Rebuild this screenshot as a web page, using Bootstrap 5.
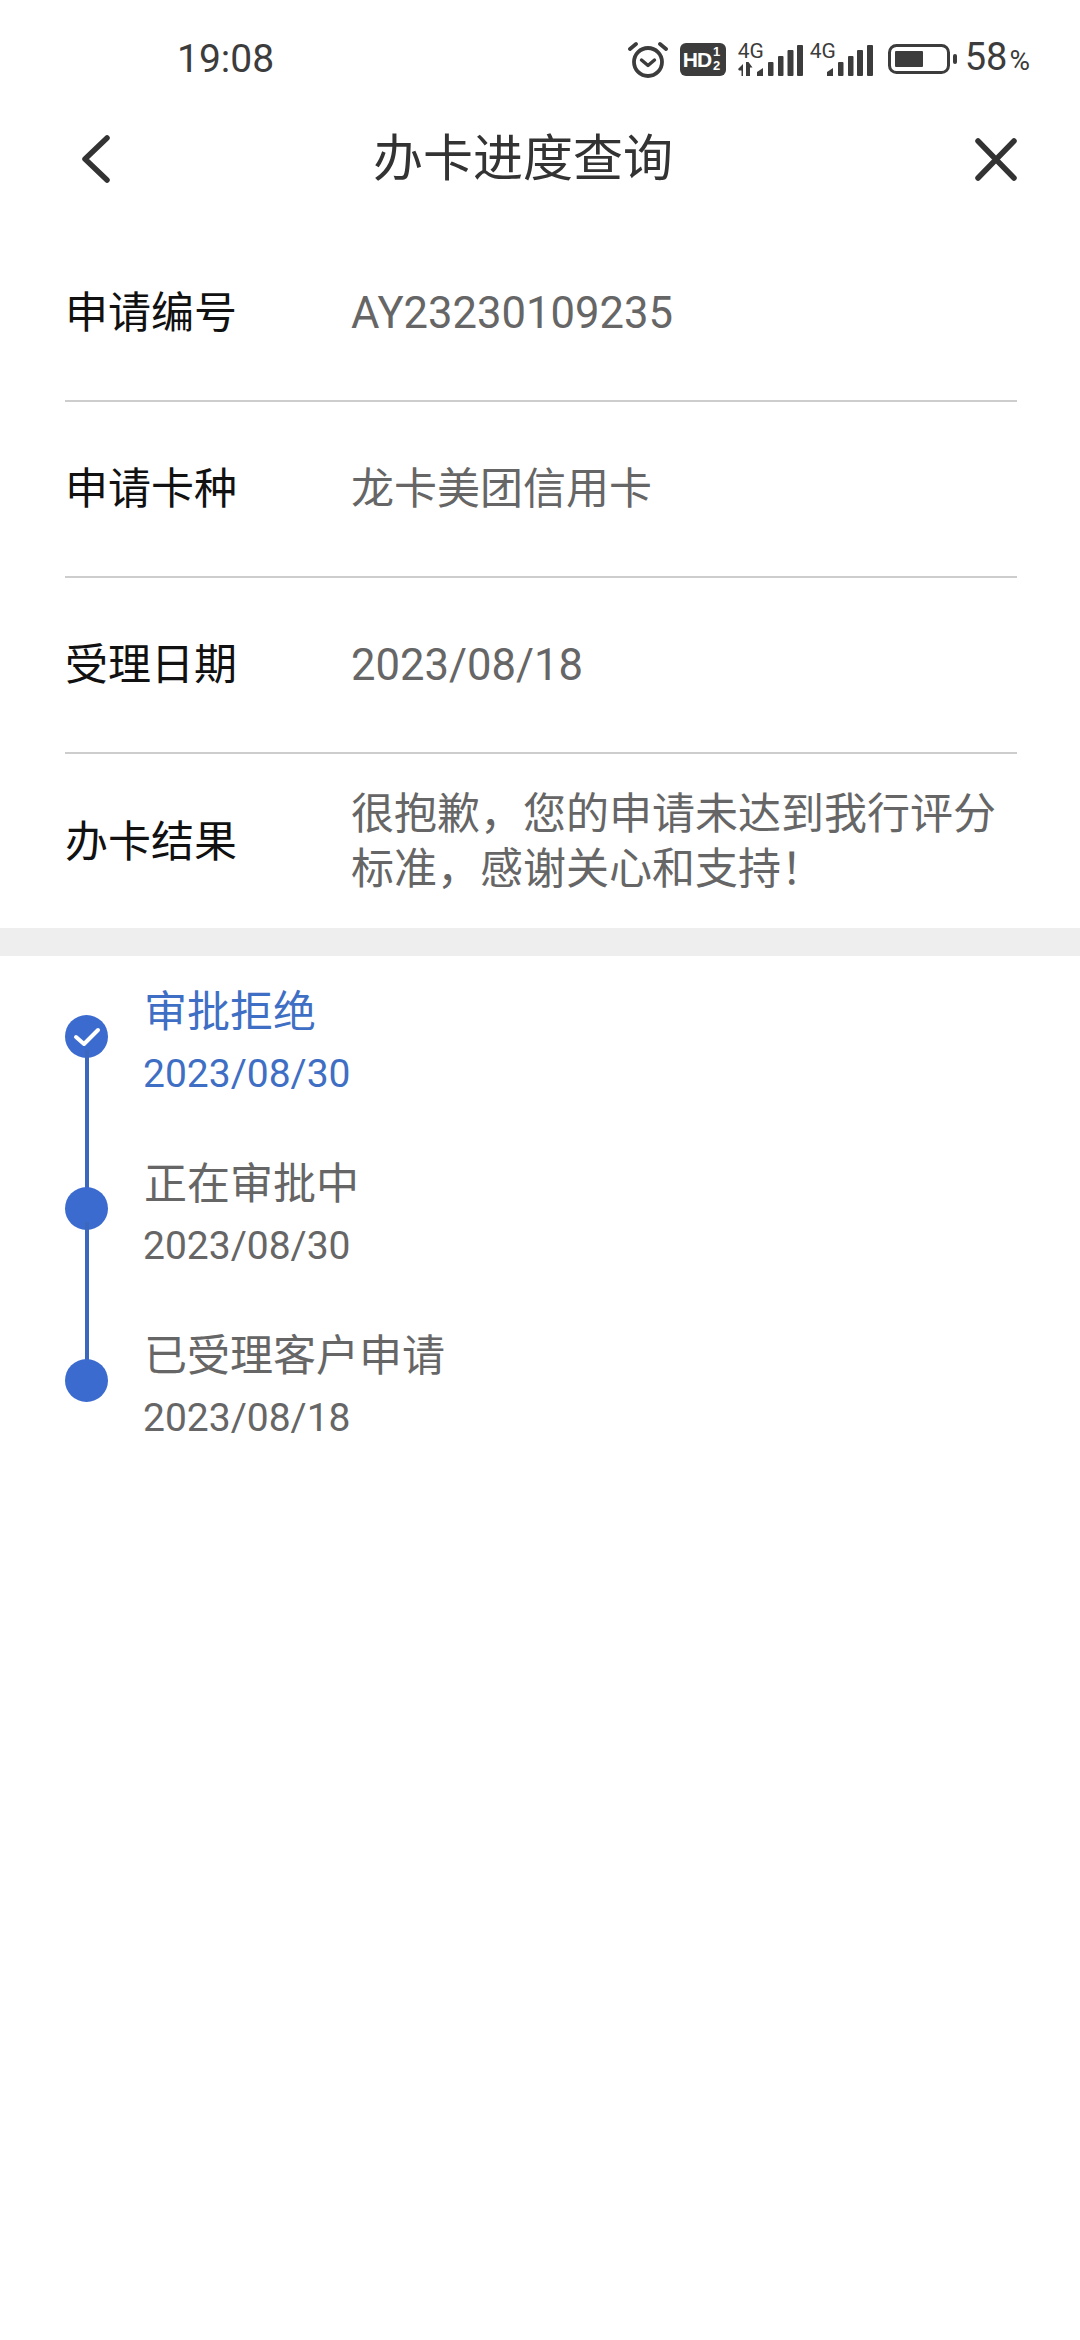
<!DOCTYPE html>
<html lang="zh-CN">
    <head>
        <meta charset="UTF-8">
        <meta name="viewport" content="width=device-width, initial-scale=1.0">
        <link href="https://cdn.jsdelivr.net/npm/bootstrap@5.3.3/dist/css/bootstrap.min.css" rel="stylesheet">
        <title>办卡进度查询</title>
        <style>
            body { font-family: Roboto, "Noto Sans CJK SC", sans-serif; background: #fff; color: #333; width: 1080px; }
            .status-row { height: 85px; padding: 37px 50px 0 177px; color: #3c3c3c; }
            .status-time { font-size: 39px; line-height: 44px; }
            .status-icons { height: 44px; }
            .status-pct { font-size: 38px; line-height: 44px; margin-left: 8px; }
            .status-pct small { font-size: 28px; margin-left: 2px; }
            .alarm-icon { margin-right: 12px; }
            .hd-tag { background: #3c3c3c; color: #fff; border-radius: 6px; width: 46px; height: 33px; font: 700 21px/33px "Liberation Sans", sans-serif; padding-left: 3px; letter-spacing: -1px; }
            .hd-frac { font-size: 13px; line-height: 14px; letter-spacing: 0; margin-left: 2px; }
            .net-tag { font-size: 21px; line-height: 19px; position: absolute; top: -1px; }
            .net-one { width: 65px; height: 33px; margin-left: 12px; }
            .net-two { width: 63px; height: 33px; margin-left: 7px; margin-right: 15px; }
            .title-bar { height: 141px; padding: 7px 63px 0 82px; }
            .title-text { font-size: 50px; color: #333; margin-left: 263px; }
            .info-row { height: 176px; margin: 0 63px 0 65px; border-bottom: 2px solid #cdcdcd; }
            .info-row:last-child { border-bottom: 0; }
            .info-name { width: 286px; font-size: 43px; color: #111; flex-shrink: 0; }
            .info-value { font-size: 43px; color: #666; line-height: 55px; }
            .info-latin { font-size: 43.6px; }
            .gap-band { height: 28px; margin-top: -2px; background: #eee; }
            .step-list { padding: 34px 0 0 65px; }
            .step-item { height: 172px; }
            .step-rail { width: 43px; margin-right: 36px; padding-top: 25px; position: relative; flex-shrink: 0; }
            .step-dot { width: 43px; height: 43px; border-radius: 50%; background: #3b6bcf; }
            .step-line { position: absolute; left: 20px; top: 60px; width: 4px; height: 172px; background: #3b68bd; }
            .step-text { margin-top: -1px; }
            .step-title { font-size: 43px; line-height: 46px; color: #666; }
            .step-date { font-size: 39px; line-height: 46px; margin-top: 16px; color: #666; margin-left: -1px; }
            .step-on .step-title, .step-on .step-date { color: #3f6fc4; }
        </style>
    </head>
    <body>
        <div class="status-row d-flex justify-content-between align-items-start">
            <div class="status-time">19:08</div>
            <div class="status-icons d-flex align-items-center">
                <svg class="alarm-icon" width="40" height="37" viewBox="0 0 40 37" fill="none" stroke="#3c3c3c" stroke-width="3.8" stroke-linecap="round" stroke-linejoin="round">
                    <circle cx="20" cy="21" r="14"/>
                    <path d="M13.500 19l6.500 5.500 6.500-5.500" stroke-width="3.4"/>
                    <path d="M2 8l6-5M38 8l-6-5"/>
                </svg>
                <div class="hd-tag d-flex align-items-center">HD<span class="hd-frac text-center">1<br>2</span></div>
                <div class="net-one position-relative">
                    <span class="net-tag start-0">4G</span>
                    <svg class="position-absolute bottom-0 start-0" width="65" height="33" viewBox="0 0 65 33" fill="#3c3c3c">
                        <path d="M0 26l5-5v12h-1.500v-5.500H1zM8 19h2.500l4 5.500h-2.500V33H8z"/>
                        <path d="M19 29l6-4v8h-6z"/>
                        <rect x="30" y="19" width="5.500" height="14" rx="1"/><rect x="40" y="13" width="5.500" height="20" rx="1"/><rect x="49.500" y="7" width="6" height="26" rx="1"/><rect x="59" y="2" width="6" height="31" rx="1"/>
                    </svg>
                </div>
                <div class="net-two position-relative">
                    <span class="net-tag start-0">4G</span>
                    <svg class="position-absolute bottom-0 start-0" width="63" height="33" viewBox="0 0 63 33" fill="#3c3c3c">
                        <path d="M17 29l6-4v8h-6z"/>
                        <rect x="28" y="19" width="5.500" height="14" rx="1"/><rect x="38" y="13" width="5.500" height="20" rx="1"/><rect x="47" y="7" width="6" height="26" rx="1"/><rect x="57" y="2" width="6" height="31" rx="1"/>
                    </svg>
                </div>
                <svg width="69" height="30" viewBox="0 0 69 30">
                    <rect x="1.500" y="1.500" width="59" height="27" rx="7" fill="none" stroke="#3c3c3c" stroke-width="3"/>
                    <rect x="7" y="7" width="28" height="16" rx="1" fill="#3c3c3c"/>
                    <rect x="65" y="10" width="4" height="10" rx="2" fill="#3c3c3c"/>
                </svg>
                <div class="status-pct">58<small>%</small></div>
            </div>
        </div>

        <div class="title-bar d-flex align-items-center">
            <svg width="28" height="48" viewBox="0 0 28 48" fill="none" stroke="#333" stroke-width="5.500" stroke-linecap="round" stroke-linejoin="round">
                <path d="M25 3L3 24l22 21"/>
            </svg>
            <div class="title-text">办卡进度查询</div>
            <svg class="ms-auto" width="42" height="43" viewBox="0 0 42 43" fill="none" stroke="#333" stroke-width="5.500" stroke-linecap="round">
                <path d="M3 3l36 37M39 3L3 40"/>
            </svg>
        </div>

        <div>
            <div class="info-row d-flex align-items-center">
                <div class="info-name">申请编号</div>
                <div class="info-value info-latin">AY23230109235</div>
            </div>
            <div class="info-row d-flex align-items-center">
                <div class="info-name">申请卡种</div>
                <div class="info-value">龙卡美团信用卡</div>
            </div>
            <div class="info-row d-flex align-items-center">
                <div class="info-name">受理日期</div>
                <div class="info-value info-latin">2023/08/18</div>
            </div>
            <div class="info-row d-flex align-items-center">
                <div class="info-name">办卡结果</div>
                <div class="info-value">很抱歉，您的申请未达到我行评分标准，感谢关心和支持！</div>
            </div>
        </div>

        <div class="gap-band"></div>

        <div class="step-list">
            <div class="step-item step-on d-flex">
                <div class="step-rail">
                    <div class="step-dot d-flex align-items-center justify-content-center">
                        <svg width="28" height="22" viewBox="0 0 28 22" fill="none" stroke="#fff" stroke-width="4" stroke-linecap="round" stroke-linejoin="round"><path d="M3 11l8 7L25 4"/></svg>
                    </div>
                    <div class="step-line"></div>
                </div>
                <div class="step-text">
                    <div class="step-title">审批拒绝</div>
                    <div class="step-date">2023/08/30</div>
                </div>
            </div>
            <div class="step-item d-flex">
                <div class="step-rail">
                    <div class="step-dot"></div>
                    <div class="step-line"></div>
                </div>
                <div class="step-text">
                    <div class="step-title">正在审批中</div>
                    <div class="step-date">2023/08/30</div>
                </div>
            </div>
            <div class="step-item d-flex">
                <div class="step-rail">
                    <div class="step-dot"></div>
                </div>
                <div class="step-text">
                    <div class="step-title">已受理客户申请</div>
                    <div class="step-date">2023/08/18</div>
                </div>
            </div>
        </div>
    </body>
</html>
